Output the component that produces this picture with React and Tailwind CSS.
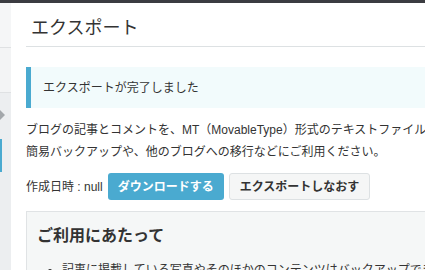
export default function App() {
  const font = { fontFamily: '"Liberation Sans", Arial, "Noto Sans CJK JP", sans-serif' };
  return (
    <div className="w-[425px] h-[270px] overflow-hidden bg-white text-[#333]" style={font}>
      <div className="h-[3px] bg-[#3b3c41]" />
      <div className="flex h-[267px]">
        <div className="w-[11px] shrink-0 flex flex-col bg-[#eceef0]">
          <div className="h-[45px] bg-[#f5f6f7] border-b border-[#dfe1e3]" />
          <div className="h-[45px] bg-[#f3f4f5] border-b border-[#dfe1e3]" />
          <div className="relative flex-1">
            <div className="absolute left-0 top-[17px] w-0 h-0 border-y-[5px] border-y-transparent border-l-[5px] border-l-[#a3a7ab]" />
            <div className="absolute left-0 top-[46px] w-[2px] h-[33px] bg-[#4aaad0]" />
          </div>
        </div>
        <div className="flex-1 pl-[15px] min-w-0">
          <div className="w-[640px]">
            <div className="h-[44px] border-b border-[#dde1e3] flex items-center pl-[5px] pt-[6px]">
              <h1 className="text-[18px] leading-none text-[#333]">エクスポート</h1>
            </div>
            <div className="mt-[20px] h-[41px] bg-[#f2fbfc] border-l-[5px] border-[#4aaad0] flex items-center pl-[12px]">
              <p className="text-[12px] text-[#333]">エクスポートが完了しました</p>
            </div>
            <p className="mt-[11px] text-[12px] leading-[22px] text-[#333]">
              ブログの記事とコメントを、MT（MovableType）形式のテキストファイルでエクスポートします。<br />
              簡易バックアップや、他のブログへの移行などにご利用ください。
            </p>
            <div className="mt-[10px] flex items-center">
              <span className="text-[12px] text-[#333]">作成日時 : null</span>
              <button className="ml-[5px] h-[27px] px-[10px] rounded-[3px] bg-[#4aaad0] text-white text-[12px] font-bold whitespace-nowrap" style={font}>ダウンロードする</button>
              <button className="ml-[5px] h-[27px] px-[10px] rounded-[3px] bg-[#f5f6f6] border border-[#dde1e3] text-[#333] text-[12px] font-bold whitespace-nowrap" style={font}>エクスポートしなおす</button>
            </div>
            <div className="mt-[11px] bg-[#f5f7f7] border border-[#e0e3e5] pl-[10px] pt-[12px] h-[120px]">
              <h2 className="text-[16px] font-bold text-[#333] leading-[24px]">ご利用にあたって</h2>
              <ul className="mt-[11px] pl-[25px] list-disc text-[12px] leading-[22px]">
                <li>記事に掲載している写真やそのほかのコンテンツはバックアップできません。</li>
              </ul>
            </div>
          </div>
        </div>
      </div>
    </div>
  );
}
